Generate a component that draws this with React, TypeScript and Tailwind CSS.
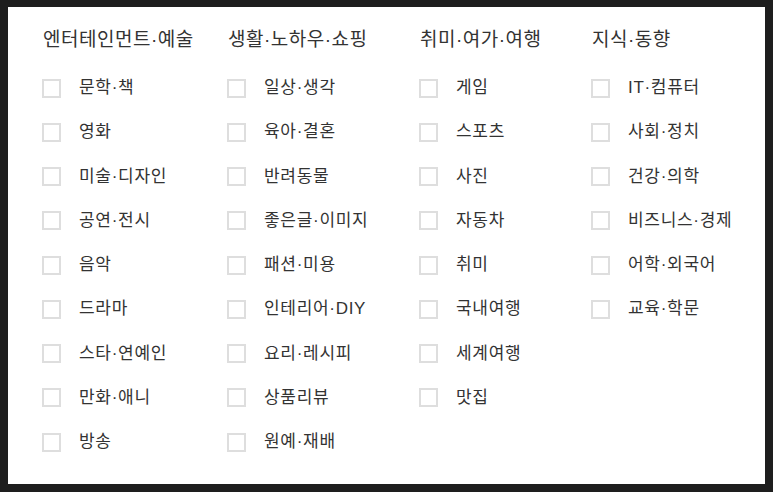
const columns = [
  {
    title: '엔터테인먼트·예술',
    width: 'w-[185px]',
    items: ['문학·책', '영화', '미술·디자인', '공연·전시', '음악', '드라마', '스타·연예인', '만화·애니', '방송'],
  },
  {
    title: '생활·노하우·쇼핑',
    width: 'w-[192px]',
    items: ['일상·생각', '육아·결혼', '반려동물', '좋은글·이미지', '패션·미용', '인테리어·DIY', '요리·레시피', '상품리뷰', '원예·재배'],
  },
  {
    title: '취미·여가·여행',
    width: 'w-[172px]',
    items: ['게임', '스포츠', '사진', '자동차', '취미', '국내여행', '세계여행', '맛집'],
  },
  {
    title: '지식·동향',
    width: 'w-[150px]',
    items: ['IT·컴퓨터', '사회·정치', '건강·의학', '비즈니스·경제', '어학·외국어', '교육·학문'],
  },
]

function Checkbox() {
  return <span className="block w-[19px] h-[19px] shrink-0 border-2 border-[#dedede] bg-white" />
}

export default function App() {
  return (
    <div
      className="w-[773px] h-[492px] bg-[#1e1e1e] pt-[7px] pl-[8px]"
      style={{ fontFamily: '"Liberation Sans", "Noto Sans CJK KR", sans-serif' }}
    >
      <div className="w-[757px] h-[477px] bg-white pt-[20px] pl-[34px] flex text-[#333]">
        {columns.map((col) => (
          <div key={col.title} className={`${col.width} flex flex-col`}>
            <h3 className="text-[19px] leading-[26px] pl-px mb-[13px] font-normal tracking-[0.5px] whitespace-nowrap">
              {col.title}
            </h3>
            {col.items.map((item) => (
              <label key={item} className="flex items-center h-[44.25px] cursor-pointer">
                <Checkbox />
                <span className="ml-[18px] text-[17px] leading-[22px] tracking-[0.7px] whitespace-nowrap">{item}</span>
              </label>
            ))}
          </div>
        ))}
      </div>
    </div>
  )
}
